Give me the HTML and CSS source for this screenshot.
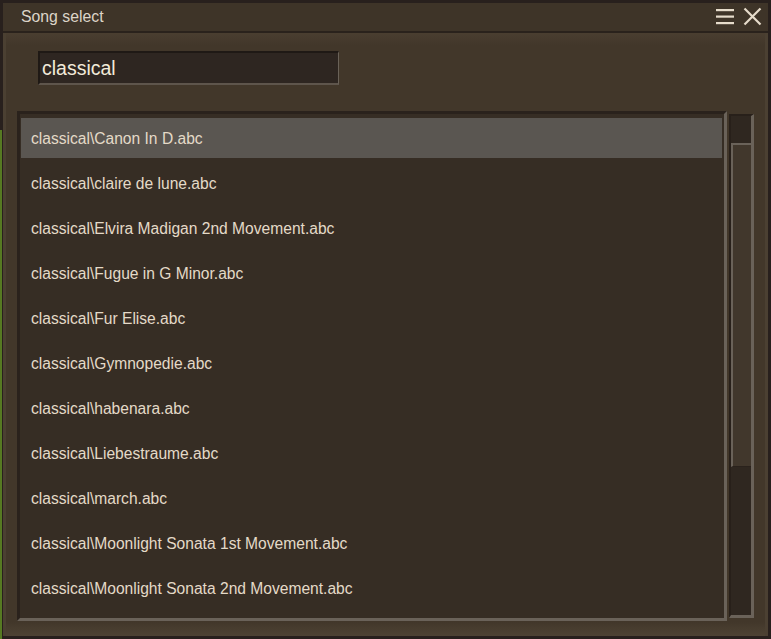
FILE: index.html
```html
<!DOCTYPE html>
<html>
<head>
<meta charset="utf-8">
<link rel="stylesheet" href="styles.css">
</head>
<body>
<div class="window">
  <div class="titlebar">
    <span class="title">Song select</span>
    <div class="icons">
      <svg class="icon" width="18" height="18" viewBox="0 0 18 18">
        <rect x="0" y="2" width="18" height="2.2" fill="#e6dccb"/>
        <rect x="0" y="8.5" width="18" height="2.2" fill="#e6dccb"/>
        <rect x="0" y="15" width="18" height="2.2" fill="#e6dccb"/>
      </svg>
      <svg class="icon" width="19" height="19" viewBox="0 0 19 19">
        <path d="M1.5 1.5 L17.5 17.5 M17.5 1.5 L1.5 17.5" stroke="#e6dccb" stroke-width="2.2" fill="none"/>
      </svg>
    </div>
  </div>
  <div class="content">
    <div class="search">classical</div>
    <div class="list-area">
      <div class="list">
        <div class="row selected">classical\Canon In D.abc</div>
        <div class="row">classical\claire de lune.abc</div>
        <div class="row">classical\Elvira Madigan 2nd Movement.abc</div>
        <div class="row">classical\Fugue in G Minor.abc</div>
        <div class="row">classical\Fur Elise.abc</div>
        <div class="row">classical\Gymnopedie.abc</div>
        <div class="row">classical\habenara.abc</div>
        <div class="row">classical\Liebestraume.abc</div>
        <div class="row">classical\march.abc</div>
        <div class="row">classical\Moonlight Sonata 1st Movement.abc</div>
        <div class="row">classical\Moonlight Sonata 2nd Movement.abc</div>
      </div>
      <div class="scrollbar">
        <div class="thumb"></div>
      </div>
    </div>
  </div>
</div>
</body>
</html>
```

FILE: styles.css
```css
* { box-sizing: border-box; }

html, body {
  margin: 0;
  padding: 0;
  width: 771px;
  height: 639px;
  overflow: hidden;
}

body {
  background:
    linear-gradient(#28201d, #28201d) 0 0 / 100% 130px no-repeat,
    linear-gradient(to right, #567a22 0 2px, #28201d 2px);
  font-family: "Liberation Sans", Arial, sans-serif;
}

.window {
  margin: 3px 0 0 3px;
  width: 765px;
  height: 633px;
  display: flex;
  flex-direction: column;
  background: #43382b;
}

.titlebar {
  height: 30px;
  flex: none;
  display: flex;
  align-items: center;
  justify-content: space-between;
  background: #3e3428;
  border-bottom: 2px solid #2a221c;
  padding: 0 6px 0 18px;
}

.title {
  color: #ddd5c8;
  font-size: 15.8px;
  margin-top: 0;
}

.icons {
  display: flex;
  align-items: center;
  gap: 9px;
  margin-top: -2px;
}

.icon { display: block; }

.content {
  flex: 1;
  display: flex;
  flex-direction: column;
  padding: 18px 14px 15px 14px;
  background: linear-gradient(#4a3e30 0, #42372a 12px, #42372a calc(100% - 14px), #4e4334 100%);
  box-shadow: inset 3px 0 0 #4b4032, inset -3px 0 0 #4b4032;
}

.search {
  margin-left: 21px;
  width: 301px;
  height: 34px;
  background: #2e2621;
  border-top: 2px solid #1f1915;
  border-left: 2px solid #1f1915;
  border-right: 1px solid #6a6258;
  border-bottom: 2px solid #5e554c;
  color: #f2ead9;
  font-size: 19.5px;
  line-height: 31px;
  padding-left: 2px;
}

.list-area {
  margin-top: 26px;
  flex: 1;
  display: flex;
  gap: 2px;
  min-height: 0;
}

.list {
  width: 710px;
  height: 510px;
  background: #362d24;
  border-top: 3px solid #2a221c;
  border-left: 3px solid #2a221c;
  border-right: 3px solid #6a6259;
  border-bottom: 3px solid #6a6259;
  padding: 4px 2px 0 1px;
  overflow: hidden;
}

.row {
  height: 40px;
  margin-bottom: 5px;
  padding-left: 10px;
  line-height: 41px;
  font-size: 15.6px;
  color: #e4dac8;
  white-space: nowrap;
}

.row.selected {
  background: #5a5651;
}

.scrollbar {
  margin-top: 3px;
  width: 25px;
  height: 504px;
  background: #2f2720;
  border-top: 2px solid #28201a;
  border-left: 2px solid #28201a;
  border-right: 3px solid #6a6259;
  border-bottom: 3px solid #6a6259;
  padding-top: 27px;
}

.thumb {
  width: 20px;
  height: 324px;
  background: #41372c;
  border-top: 2px solid #6a6259;
  border-left: 2px solid #6a6259;
  border-bottom: 1px solid #2a221c;
}
```
